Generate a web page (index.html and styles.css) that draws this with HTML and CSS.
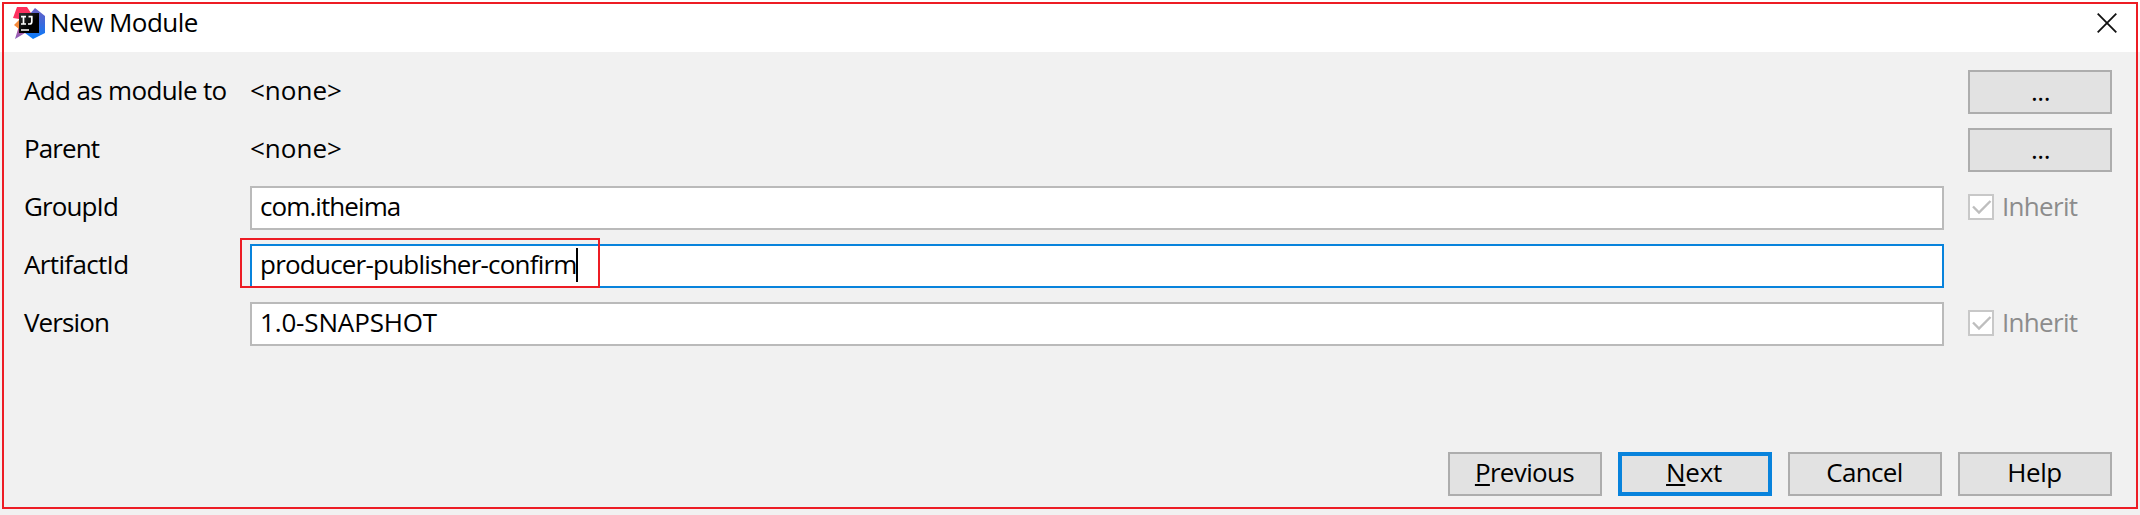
FILE: index.html
```html
<!DOCTYPE html>
<html lang="en">
<head>
<meta charset="utf-8">
<title>New Module</title>
<link rel="stylesheet" href="styles.css">
</head>
<body>
<div class="dialog">
  <header class="titlebar">
    <svg class="logo" width="32" height="32" viewBox="0 0 32 32">
      <defs>
        <linearGradient id="pink" x1="0" y1="0" x2="0" y2="1"><stop offset="0" stop-color="#ff2f5c"/><stop offset=".45" stop-color="#fc3464"/><stop offset=".75" stop-color="#a85aa8"/><stop offset="1" stop-color="#8a5fbc"/></linearGradient>
        <linearGradient id="blue" x1="0" y1="0" x2="0" y2="1"><stop offset="0" stop-color="#6a60c4"/><stop offset=".5" stop-color="#3b69dc"/><stop offset="1" stop-color="#087cfa"/></linearGradient>
        <linearGradient id="dark" x1="0" y1="0" x2="1" y2="1"><stop offset="0" stop-color="#333"/><stop offset=".6" stop-color="#000"/></linearGradient>
      </defs>
      <path d="M4 0h10l4 6v12l-6 8-10 6 4-13V12L0 11z" fill="url(#pink)"/>
      <path d="M6 13l-5 5 5 4z" fill="#f58a3c"/>
      <path d="M22 1l10 8v17l-12 6-8-6 4-18z" fill="url(#blue)"/>
      <path d="M6 6h20v20H6z" fill="url(#dark)"/>
      <path d="M8 9.700h5M10.500 9v8M8 17h5M15.500 9.700h4M18.800 9v5.500q0 2.500-2 2.500h-1.800M8 23h8" fill="none" stroke="#fff" stroke-width="1.700"/>
    </svg>
    <h1 class="title">New Module</h1>
    <svg class="close" width="20" height="20" viewBox="0 0 20 20"><path d="M.7.7l18.600 18.600M19.300.7L.7 19.300" fill="none" stroke="#111" stroke-width="1.800"/></svg>
  </header>
  <main class="form">
    <div class="label">Add as module to</div><div class="value">&lt;none&gt;</div><button class="btn browse">...</button>
    <div class="label parent">Parent</div><div class="value">&lt;none&gt;</div><button class="btn browse">...</button>
    <div class="label parent">GroupId</div><div class="field group">com.itheima</div>
    <div class="check"><svg class="box" width="26" height="26" viewBox="0 0 26 26"><path d="M1 1h24v24H1z" fill="#fff" stroke="#c8c8c8" stroke-width="2"/><path d="M5 12.500l6 6L22.500 7" fill="none" stroke="#bebebe" stroke-width="2.400"/></svg>Inherit</div>
    <div class="label">ArtifactId</div><div class="field focused"><span class="typed">producer-publisher-confirm</span><i class="caret"></i><i class="highlight"></i></div><div></div>
    <div class="label parent">Version</div><div class="field version">1.0-SNAPSHOT</div>
    <div class="check"><svg class="box" width="26" height="26" viewBox="0 0 26 26"><path d="M1 1h24v24H1z" fill="#fff" stroke="#c8c8c8" stroke-width="2"/><path d="M5 12.500l6 6L22.500 7" fill="none" stroke="#bebebe" stroke-width="2.400"/></svg>Inherit</div>
  </main>
  <footer class="actions">
    <button class="btn"><u>P</u>revious</button>
    <button class="btn primary"><u>N</u>ext</button>
    <button class="btn">Cancel</button>
    <button class="btn help">Help</button>
  </footer>
</div>
</body>
</html>
```
FILE: styles.css
```css
*, *::after { box-sizing: border-box; }
body { margin: 0; width: 2140px; height: 515px; background: #f1f1f1; color: #000; font: 26px/36px "Open Sans", "Noto Sans", sans-serif; overflow: hidden; }
.dialog { position: relative; height: 515px; display: flex; flex-direction: column; }
.dialog::after { content: ""; position: absolute; left: 2px; top: 2px; width: 2136px; height: 507px; border: 2px solid #ed1c24; pointer-events: none; }
.titlebar { height: 52px; flex: none; display: flex; align-items: flex-start; background: #fff; padding: 7px 23px 0 13px; }
.title { margin: -3px auto 0 5px; font: inherit; letter-spacing: -.52px; }
.close { margin-top: 6px; }
.form { display: grid; grid-template-columns: 226px 1694px 24px 144px; grid-auto-rows: 44px; row-gap: 14px; padding: 18px 28px 0 24px; }
.form > :nth-child(3n) { grid-column: 4; }
.label, .value { line-height: 41px; }
.label { letter-spacing: -.65px; }
.parent { letter-spacing: -.9px; }
.field { position: relative; display: flex; background: #fff; border: 2px solid #bababa; padding-left: 8px; }
.group { letter-spacing: -.92px; }
.version { letter-spacing: -.15px; }
.focused { border-color: #0883dc; }
.typed { width: 316px; white-space: nowrap; letter-spacing: -.78px; }
.caret { width: 2px; height: 34px; margin-top: 2px; background: #000; }
.highlight { position: absolute; left: -12px; top: -8px; width: 360px; height: 50px; border: 2px solid #ed1c24; }
.check { display: flex; color: #8c8c8c; line-height: 41px; letter-spacing: -.7px; }
.box { margin: 8px 8px 0 0; }
.btn { font: inherit; letter-spacing: -.65px; color: #000; background: #e2e2e2; border: 2px solid #adadad; border-radius: 0; width: 154px; height: 44px; padding: 0 1px 4px 0; line-height: 36px; }
.btn u { text-decoration-thickness: 2px; text-underline-offset: 2px; }
.browse { width: 144px; padding: 0 0 2px 1px; letter-spacing: -.5px; }
.primary { border: 4px solid #0883dc; letter-spacing: -.3px; line-height: 32px; padding-right: 2px; }
.help { letter-spacing: -.4px; }
.actions { display: flex; justify-content: flex-end; gap: 16px; margin-top: 106px; padding-right: 28px; }
```
